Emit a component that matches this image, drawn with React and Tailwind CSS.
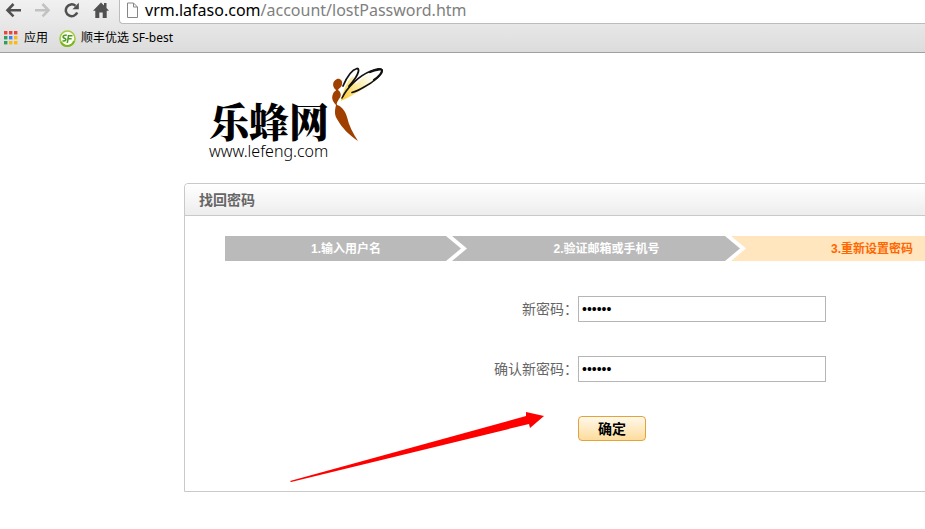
import React from "react";

const APP_COLORS = [
  "#e8453c", "#e8453c", "#e8453c",
  "#2f9e5b", "#3b82f6", "#f9b916",
  "#2f9e5b", "#f9b916", "#f9b916",
];

function BrowserBar() {
  return (
    <header className="h-[53px] overflow-hidden border-b border-[#a0a0a0] bg-gradient-to-b from-[#f1f1f1] to-[#dcdcdc]">
      <div className="flex h-6">
        <nav className="flex w-[119px] shrink-0 gap-[11px] pl-[5px] pt-[2px]">
          <button type="button" aria-label="Back" className="h-4 w-[18px]">
            <svg width="18" height="16" viewBox="0 0 18 16" fill="none" stroke="#505050" strokeWidth="2.6">
              <path d="M8.5 2 2.5 8.3l6 6M3 8.3h13" />
            </svg>
          </button>
          <button type="button" aria-label="Forward" className="h-4 w-[18px]">
            <svg width="18" height="16" viewBox="0 0 18 16" fill="none" stroke="#c2c2c2" strokeWidth="2.6">
              <path d="m8.5 2 6 6.3-6 6M14 8.3H1" />
            </svg>
          </button>
          <button type="button" aria-label="Reload" className="h-4 w-[18px]">
            <svg width="18" height="16" viewBox="0 0 18 16">
              <path d="M14.200 10.500A5.900 5.900 0 1 1 12.500 3.700" fill="none" stroke="#505050" strokeWidth="2.500" />
              <path d="M15.800.800v6.400H9.500z" fill="#505050" />
            </svg>
          </button>
          <button type="button" aria-label="Home" className="h-4 w-[18px]">
            <svg width="18" height="16" viewBox="0 0 18 16" fill="#505050">
              <path d="M9 .500 12 3.500V1h2.500v5L17 8.700h-2.300V16h-4v-5.500H7.300V16h-4V8.700H1z" />
            </svg>
          </button>
        </nav>
        <div className="flex min-w-0 flex-1 items-start rounded-bl-sm border-b border-l border-[#bcbcbc] bg-white pl-[6px]">
          <svg className="mr-[6px] mt-[2px] shrink-0" width="13" height="17" viewBox="0 0 13 17" fill="#fdfdfd" stroke="#858585">
            <path d="M1.500 1h6l4 4v10.500h-10zM7.500 1v4h4" />
          </svg>
          <span className="whitespace-nowrap font-['Noto_Sans',sans-serif] text-[16px] leading-5 text-[#808080]">
            <span className="text-black">vrm.lafaso.com</span>/account/lostPassword.htm
          </span>
        </div>
      </div>
      <div className="flex h-7 items-center pl-1 font-['Noto_Sans','Noto_Sans_CJK_SC',sans-serif] text-xs text-black">
        <a href="#apps" className="flex items-center gap-[6px]">
          <svg width="14" height="14" viewBox="0 0 14 14">
            {APP_COLORS.map((color, i) => (
              <rect key={i} x={(i % 3) * 5} y={Math.floor(i / 3) * 5} width="3.4" height="3.4" fill={color} />
            ))}
          </svg>
          应用
        </a>
        <a href="#sf" className="ml-[11px] flex items-center gap-[5px] whitespace-nowrap">
          <svg width="17" height="17" viewBox="0 0 17 17">
            <circle cx="8.500" cy="8.500" r="7.500" fill="#fbfdf2" stroke="#a3cb3c" strokeWidth="1.600" />
            <path d="M2 12a7 7 0 0 0 13-1" fill="none" stroke="#7db51e" strokeWidth="2" />
            <path d="M7.800 5.300C4 4.500 2.800 7.500 5.500 8.300c2.500.700 1.500 3-2 2.500" fill="none" stroke="#4c9a24" strokeWidth="1.500" />
            <path d="M8.300 13 9.500 5.800h4M9.200 8.800h3.400" fill="none" stroke="#4c9a24" strokeWidth="1.500" />
          </svg>
          顺丰优选 SF-best
        </a>
      </div>
    </header>
  );
}

function Logo() {
  return (
    <a href="#home" className="flex w-[180px] pt-[13px] text-black">
      <span className="flex w-[121px] shrink-0 flex-col pt-8">
        <span className="whitespace-nowrap font-['Noto_Serif_CJK_SC','Noto_Sans_CJK_SC',serif] text-[40px] font-black leading-[44px]">
          乐蜂网
        </span>
        <span className="font-['Noto_Sans',sans-serif] text-[16px] font-light leading-[18px]">www.lefeng.com</span>
      </span>
      <svg width="56" height="78" viewBox="330 66 56 78" className="shrink-0">
        <defs>
          <linearGradient id="wing" gradientUnits="userSpaceOnUse" x1="342" y1="100" x2="374" y2="78">
            <stop offset="0" stopColor="#fbc92f" />
            <stop offset=".5" stopColor="#fdeb9d" />
            <stop offset="1" stopColor="#fff" />
          </linearGradient>
        </defs>
        <path d="M341 101c2-10 6-20 12-25l3 8c8-8 16-12 22-11 4 4-8 14-37 28z" fill="url(#wing)" />
        <g fill="none" stroke="#111" strokeLinecap="round">
          <path d="M343 86c3-7 8-16 14-17.500 4 0 0 9-8 17.500" strokeWidth="1.800" />
          <path d="M342 98c5-10 16-22 29-27 6-2.500 11-3 11-.500 0 4-9 12-17 16-5 3-9 5-13 6" strokeWidth="1.600" />
          <path d="M370 72c6-2.500 12-3.500 12-1.500 0 2-3 6-8 9.500" strokeWidth="2.200" />
        </g>
        <path d="M337 79c3-1 6 2 5 5 0 3-3 4-4 6 3 2 4 6 1 9-1 2-3 4-2 6 4 1 8 5 10 12 2 9 6 16 11 24-9-6-16-13-21-22-3-5-2-9-1-14-3-3-5-7-3-11 1-3 3-3 3-4-4-3-4-9 1-11z" fill="#a04000" />
      </svg>
    </a>
  );
}

function StepArrow({ next }) {
  return (
    <svg className="absolute right-0 top-0 h-full w-[21px]" viewBox="0 0 21 25">
      <path d="M0 0h21v25H0z" fill={next} />
      <path d="M0 0h6l15 12.500L6 25H0z" fill="#fff" />
      <path d="M0 0l15 12.500L0 25z" fill="#bababa" />
    </svg>
  );
}

function Steps() {
  return (
    <ol className="flex h-[25px] text-center text-xs font-bold leading-[26px] text-white">
      <li className="relative w-[242px] shrink-0 bg-[#bababa]">
        1.输入用户名
        <StepArrow next="#bababa" />
      </li>
      <li className="relative w-[279px] shrink-0 bg-[#bababa]">
        2.验证邮箱或手机号
        <StepArrow next="#ffe6bf" />
      </li>
      <li className="w-[252px] shrink-0 bg-[#ffe6bf] text-[#ff6600]">3.重新设置密码</li>
    </ol>
  );
}

function PasswordRow({ id, label }) {
  return (
    <div className="flex h-[26px] items-center">
      <label htmlFor={id} className="w-[393px] shrink-0 text-right text-sm text-[#666]">
        {label}
      </label>
      <input
        id={id}
        type="password"
        defaultValue="secret"
        className="h-[26px] w-[248px] border border-[#b5b5b5] bg-white px-[3px] font-['Liberation_Sans',sans-serif] text-sm text-black outline-none"
      />
    </div>
  );
}

export default function App() {
  return (
    <div className="min-h-screen overflow-x-hidden bg-white font-['Liberation_Sans','Noto_Sans_CJK_SC',sans-serif]">
      <BrowserBar />
      <main className="pl-[184px]">
        <div className="h-[130px] pl-[25px]">
          <Logo />
        </div>
        <section className="relative min-w-[854px] rounded-t border border-[#c9c9c9]">
          <h1 className="h-8 rounded-t border-b border-[#c9c9c9] bg-gradient-to-b from-white to-[#ededed] pl-[14px] text-sm font-bold leading-8 text-[#666]">
            找回密码
          </h1>
          <form className="h-[275px] pt-5" onSubmit={(e) => e.preventDefault()}>
            <div className="pl-10">
              <Steps />
            </div>
            <div className="mt-[35px] flex flex-col gap-[34px]">
              <PasswordRow id="new-password" label="新密码：" />
              <PasswordRow id="confirm-password" label="确认新密码：" />
              <button
                type="submit"
                className="ml-[393px] h-[25px] w-[68px] rounded-sm border border-[#e3a33b] bg-gradient-to-b from-[#fff8ea] to-[#fddc9c] text-sm font-bold text-black"
              >
                确定
              </button>
            </div>
          </form>
          <svg className="pointer-events-none absolute left-[105px] top-[227px]" width="256" height="72" viewBox="290 411 256 72" aria-hidden="true">
            <path d="M290 481 526 416 526 412 544 416 530 428 529 424 291 482z" fill="#f00" />
          </svg>
        </section>
      </main>
    </div>
  );
}
